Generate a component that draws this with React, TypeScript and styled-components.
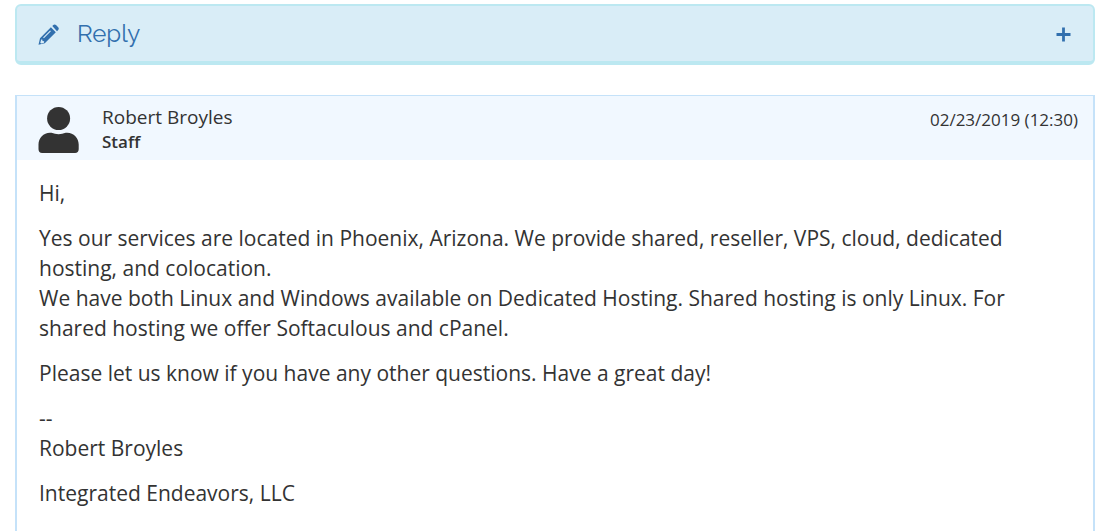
import React from "react";
import styled, { createGlobalStyle } from "styled-components";

const GlobalStyle = createGlobalStyle`
  * { box-sizing: border-box; }
  body {
    margin: 0;
    background: #fff;
    color: #333;
    font-family: "Open Sans", "Noto Sans", sans-serif;
    overflow: hidden;
  }
`;

const Page = styled.main`
  padding: 4px 10px 0 15px;
`;

const ReplyBar = styled.button`
  display: flex;
  align-items: center;
  width: 100%;
  height: 61px;
  padding: 2px 22px 0 21px;
  border: 2px solid #bce8f1;
  border-bottom-width: 4px;
  border-radius: 6px;
  background: #d9edf7;
  color: #3270ae;
  text-align: left;
  cursor: pointer;
`;

const ReplyLabel = styled.span`
  flex: 1;
  margin: 0 0 2px 18px;
  font-family: Raleway, Lato, sans-serif;
  font-size: 24px;
  font-weight: 400;
  line-height: 32px;
`;

const Ticket = styled.article`
  min-height: 460px;
  margin-top: 30px;
  border: 2px solid #c5e2f9;
  border-top-width: 1px;
`;

const TicketHeader = styled.header`
  display: flex;
  align-items: flex-start;
  height: 64px;
  padding: 9px 15px 0 21px;
  background: #f1f8ff;
`;

const Avatar = styled.svg`
  margin-top: 2px;
`;

const Author = styled.div`
  flex: 1;
  margin-left: 23px;
`;

const Name = styled.div`
  font-size: 19px;
  line-height: 25px;
`;

const Role = styled.div`
  font-size: 17px;
  font-weight: 600;
  line-height: 24px;
`;

const Timestamp = styled.time`
  margin-top: 3px;
  font-size: 17px;
  line-height: 24px;
`;

const Message = styled.div`
  padding: 18px 22px;
  font-size: 21px;
  line-height: 30px;

  p {
    margin: 0 0 15px;
  }
`;

export default function App() {
  return (
    <>
      <GlobalStyle />
      <Page>
        <ReplyBar type="button">
          <svg width="21" height="21" viewBox="0 0 21 21" aria-hidden>
            <path
              d="M14.300 2.100l1-1c.8-.8 1.900-.8 2.700 0l2.200 2.200c.8.8.8 1.900 0 2.700l-1.200 1.200z"
              fill="currentColor"
            />
            <path
              fillRule="evenodd"
              d="M12.900 3.300l4.900 4.900L6.800 19.200.5 20.700 2 14.200zM3.200 15.500l-.9 3.200.9.900 2.800-.9.200-1.400-1.700-.2-.2-1.700z"
              fill="currentColor"
            />
            <path d="M5.500 13.800l7-7" stroke="#d9edf7" strokeWidth="1.1" />
          </svg>
          <ReplyLabel>Reply</ReplyLabel>
          <svg width="15" height="15" viewBox="0 0 15 15" aria-hidden>
            <path d="M7.5 0.5v14M0.5 7.5h14" stroke="currentColor" strokeWidth="2.8" />
          </svg>
        </ReplyBar>
        <Ticket>
          <TicketHeader>
            <Avatar width="41" height="47" viewBox="0 0 41 47" fill="currentColor" aria-hidden>
              <circle cx="20.6" cy="11.5" r="11.5" />
              <path d="M12 25.7h1.5c4.500 1.900 9.700 1.900 14.200 0h1.500c6.500 0 11.500 5.300 11.500 11.800v4.800c0 2.200-1.400 3.700-3.600 3.700H4.100C1.900 46 .5 44.500.5 42.300v-4.800C.5 31 5.500 25.700 12 25.700z" />
            </Avatar>
            <Author>
              <Name>Robert Broyles</Name>
              <Role>Staff</Role>
            </Author>
            <Timestamp dateTime="2019-02-23T12:30">02/23/2019 (12:30)</Timestamp>
          </TicketHeader>
          <Message>
            <p>Hi,</p>
            <p>
              Yes our services are located in Phoenix, Arizona. We provide shared, reseller, VPS, cloud, dedicated
              hosting, and colocation.
              <br />
              We have both Linux and Windows available on Dedicated Hosting. Shared hosting is only Linux. For shared
              hosting we offer Softaculous and cPanel.
            </p>
            <p>Please let us know if you have any other questions. Have a great day!</p>
            <p>
              --
              <br />
              Robert Broyles
            </p>
            <p>Integrated Endeavors, LLC</p>
          </Message>
        </Ticket>
      </Page>
    </>
  );
}
